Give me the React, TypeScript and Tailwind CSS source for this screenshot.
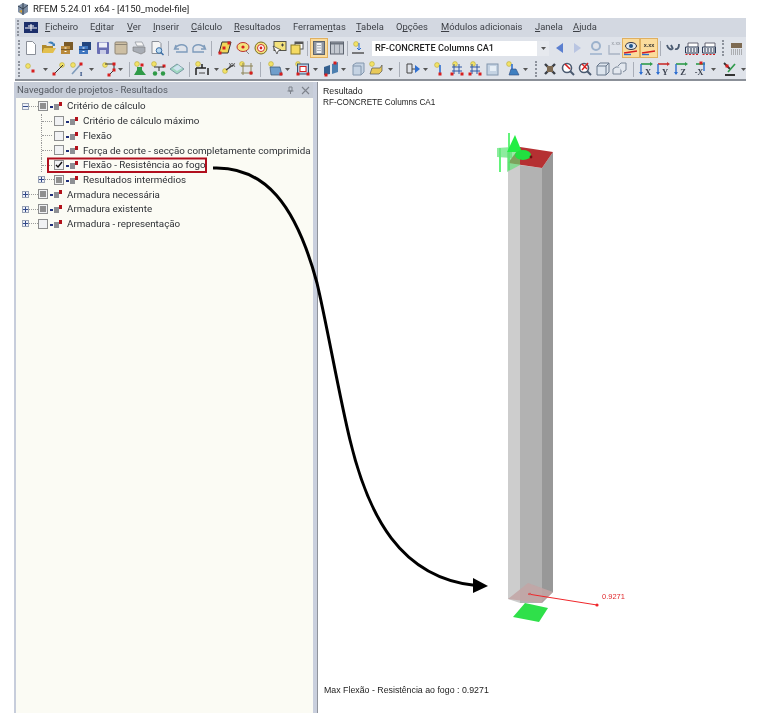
import React from "react";

const uiFont = { fontFamily: 'Roboto, "Noto Sans", sans-serif' };

function I({ c = "", children }: { c?: string; children?: React.ReactNode }) {
  return (
    <svg width="16" height="16" viewBox="0 0 16 16" className={"shrink-0 " + c}>
      {children}
    </svg>
  );
}

function Active({ c = "", children }: { c?: string; children?: React.ReactNode }) {
  return (
    <span className={"w-[18px] h-[20px] shrink-0 flex items-center justify-center border border-[#e0b060] bg-[#fbdc9c] " + c}>
      <svg width="16" height="16" viewBox="0 0 16 16">{children}</svg>
    </span>
  );
}

function Caret({ c = "" }: { c?: string }) {
  return (
    <svg width="7" height="16" viewBox="0 0 7 16" className={"shrink-0 " + c}>
      <path d="M1 7h5l-2.5 3z" fill="#555" />
    </svg>
  );
}

function Sep({ c = "" }: { c?: string }) {
  return <span className={"w-px h-[15px] shrink-0 bg-[#a9aeb8] " + c} />;
}

function Grip({ c = "" }: { c?: string }) {
  return <span className={"w-[2px] h-[16px] shrink-0 border-l-2 border-dotted border-[#8d929c] " + c} />;
}

const Y = ({ x, y }: { x: number; y: number }) => <circle cx={x} cy={y} r="2.4" fill="#f2e268" stroke="#b9a93a" strokeWidth=".6" />;
const R = ({ x, y }: { x: number; y: number }) => <rect x={x - 1.5} y={y - 1.5} width="3" height="3" fill="#d81e1e" />;

const Doc = () => <path d="M3.5 1.5h6l3 3v10h-9z" fill="#fff" stroke="#8a8f98" />;
const Folder = () => (
  <>
    <path d="M1 13V5h4l1 1h6v7z" fill="#b08a2c" />
    <path d="M1 13l2-5h12l-3 5z" fill="#e3c04e" />
    <path d="M7 3c2-2 5-2 6 1l1-1v3h-3l1-1c-1-1-3-2-5-2z" fill="#3d7fb8" />
  </>
);
const Drawers = ({ a, b }: { a: string; b: string }) => (
  <>
    <path d="M5 2h9v8H5z" fill={b} />
    <path d="M2 6h9v8H2z" fill={a} />
    <path d="M2 9.5h9" stroke={b} />
    <rect x="5.5" y="7.5" width="2" height="1" fill="#fff" />
    <rect x="5.5" y="11" width="2" height="1" fill="#fff" />
  </>
);
const Floppy = () => (
  <>
    <rect x="2" y="2" width="12" height="12" rx="1" fill="#6a6fb4" />
    <rect x="4" y="2.5" width="8" height="5" fill="#eef0f8" />
    <rect x="5" y="10" width="6" height="4" fill="#c9cce6" />
  </>
);
const Notes = () => (
  <>
    <rect x="2" y="2" width="12" height="12" rx="1" fill="#cdbfa4" stroke="#8f8676" />
    <path d="M2 4.5h12" stroke="#8f8676" />
  </>
);
const Printer = () => (
  <>
    <path d="M4 2h7l2 4H6z" fill="#f4f4f4" stroke="#8a8f98" strokeWidth=".7" />
    <path d="M2 7h12v5l-4 2-8-3z" fill="#a8adb5" stroke="#777" strokeWidth=".6" />
  </>
);
const Preview = () => (
  <>
    <path d="M3 1.5h7l2 2v10H3z" fill="#f4f4f4" stroke="#8a8f98" />
    <circle cx="10" cy="10.5" r="2.8" fill="#b8d8f0" stroke="#3a6ea5" />
    <path d="M12 12.5l2.5 2.5" stroke="#3a6ea5" strokeWidth="1.5" />
  </>
);
const Undo = ({ flip = false }: { flip?: boolean }) => (
  <g transform={flip ? "translate(16 0) scale(-1 1)" : undefined}>
    <path d="M3 5l-1.5 4h4.5M2 9c2-5 10-6 12-1v4H3" fill="none" stroke="#7f9cbc" strokeWidth="1.4" />
  </g>
);
const Para = () => (
  <>
    <path d="M5 2h9l-3 11H2z" fill="#f0d65a" stroke="#333" />
    <R x={3} y={13} />
    <R x={12} y={3} />
    <R x={7} y={8} />
  </>
);
const Blob = () => (
  <>
    <ellipse cx="8" cy="7" rx="6" ry="4.5" fill="#f3e27c" stroke="#b33" />
    <circle cx="8" cy="7" r="1.6" fill="#d81e1e" />
    <path d="M11 11l3 3" stroke="#888" />
  </>
);
const Target = () => (
  <>
    <circle cx="8" cy="8" r="6" fill="#f3e27c" stroke="#7a6a20" />
    <circle cx="8" cy="8" r="3.5" fill="#fff" stroke="#c33" />
    <circle cx="8" cy="8" r="1.4" fill="#d81e1e" />
  </>
);
const Screen = () => (
  <>
    <rect x="3" y="1.5" width="12" height="9" fill="#f3e27c" stroke="#54544a" />
    <path d="M2 6l4 8 1-3 3-1z" fill="#fff" stroke="#333" strokeWidth=".7" />
    <path d="M10 5h3M11.5 3.5v3" stroke="#444" />
  </>
);
const Win = () => (
  <>
    <rect x="6" y="2" width="8" height="7" fill="#fff" stroke="#555" />
    <rect x="6" y="2" width="8" height="2" fill="#555" />
    <rect x="2" y="5" width="9" height="9" fill="#f4da62" stroke="#8a7a28" />
  </>
);
const ColumnsPanel = () => (
  <>
    <rect x="2.5" y="1.5" width="11" height="13" fill="#8f96a1" stroke="#5c636e" />
    <rect x="5.5" y="3" width="5" height="10" fill="#f1f2f4" />
    <path d="M6 5.5h4M6 8h4M6 10.5h4" stroke="#9aa0aa" strokeWidth=".8" />
  </>
);
const TablePanel = () => (
  <>
    <rect x="1.5" y="2" width="13" height="12" fill="#c4c9d1" stroke="#5c636e" />
    <rect x="2" y="2.5" width="12" height="2" fill="#6d747f" />
    <path d="M5.5 4v10M10.5 4v10" stroke="#7e8590" strokeWidth=".8" />
  </>
);
const Eye = () => (
  <>
    <ellipse cx="8" cy="6" rx="5.5" ry="3.5" fill="#dfe7ef" stroke="#334" />
    <circle cx="8" cy="6" r="2" fill="#20548a" />
    <path d="M1 13l13-2" stroke="#d81e1e" strokeWidth="1.4" />
    <path d="M1 14.5h7" stroke="#2f6fd0" strokeWidth="1.4" />
  </>
);
const XX = () => (
  <>
    <text x="8" y="7" textAnchor="middle" fontSize="5.5" fontWeight="700" fill="#333" fontFamily="Liberation Sans">x.xx</text>
    <path d="M1 13l13-2" stroke="#d81e1e" strokeWidth="1.4" />
    <path d="M1 14.5h7" stroke="#2f6fd0" strokeWidth="1.4" />
  </>
);
const Chart = () => (
  <>
    <path d="M4 3h10v6H4z" fill="#fff" stroke="#445" strokeWidth=".8" />
    <path d="M1.5 7h13v6h-13z" fill="#e6e9ef" stroke="#2b3a55" />
    <path d="M4 8v4M7 8v4M10 8v4M13 8v4" stroke="#2b3a55" />
    <path d="M1.5 14.5h13" stroke="#d81e1e" strokeDasharray="2 1.5" />
  </>
);
const Axis = ({ l, col }: { l: string; col: string }) => (
  <>
    <path d="M3 3h9" stroke={col} strokeWidth="1.6" />
    <path d="M3 3v10" stroke="#2f6fd0" strokeWidth="1.4" />
    <path d="M1 11l2 3 2-3z" fill="#2f6fd0" />
    <path d="M12 1l3 2-3 2z" fill={col} />
    <text x="10" y="13.5" textAnchor="middle" fontSize="8.5" fontWeight="700" fill="#3b4250" fontFamily="Liberation Serif">{l}</text>
  </>
);

function CheckBox({ state }: { state: "none" | "part" | "on" }) {
  return (
    <span className="w-[10px] h-[10px] shrink-0 border border-[#8e8f8f] bg-[#f1f2f4] flex items-center justify-center">
      {state === "part" && <span className="w-[6px] h-[6px] bg-[#8f8f8f]" />}
      {state === "on" && (
        <svg width="8" height="8" viewBox="0 0 8 8">
          <path d="M1 4l2 2 4-5" fill="none" stroke="#111" strokeWidth="1.4" />
        </svg>
      )}
    </span>
  );
}

function TreeIcon() {
  return (
    <svg width="13" height="10" viewBox="0 0 13 10" className="shrink-0 ml-[2px]">
      <rect x="0" y="5" width="3" height="2" fill="#1f2f7a" />
      <rect x="4" y="3" width="5" height="6" fill="#8d8f93" />
      <rect x="9" y="1" width="3" height="4" fill="#b3111b" />
    </svg>
  );
}

function Expander({ open = false }: { open?: boolean }) {
  return (
    <span className="w-[7px] h-[7px] shrink-0 border border-[#9aa3b5] bg-[#eef1f8] flex items-center justify-center relative">
      <span className="w-[5px] h-px bg-[#334a8a]" />
      {!open && <span className="absolute w-px h-[5px] bg-[#334a8a]" />}
    </span>
  );
}

const Dash = ({ c }: { c: string }) => <span className={"h-px shrink-0 border-t border-dotted border-[#9a9a9a] " + c} />;

function Top({ state, label, open }: { state: "none" | "part" | "on"; label: string; open?: boolean }) {
  return (
    <div className="h-[14.7px] flex items-center pl-[6px]">
      <Expander open={open} />
      <Dash c="w-[9px]" />
      <CheckBox state={state} />
      <TreeIcon />
      <span className="ml-[4px]">{label}</span>
    </div>
  );
}

function Sub({ state, label, exp }: { state: "none" | "part" | "on"; label: string; exp?: boolean }) {
  return (
    <div className="h-[14.7px] flex items-center pl-[22px]">
      {exp ? (
        <>
          <Expander />
          <Dash c="w-[9px]" />
        </>
      ) : (
        <span className="w-[13px] h-full ml-[3px] flex items-center border-l border-dotted border-[#9a9a9a]">
          <Dash c="w-[10px]" />
        </span>
      )}
      <CheckBox state={state} />
      <TreeIcon />
      <span className="ml-[4px] whitespace-nowrap">{label}</span>
    </div>
  );
}

function Menu({ children, c }: { children: React.ReactNode; c: string }) {
  return <span className={"shrink-0 whitespace-nowrap " + c}>{children}</span>;
}

export default function App() {
  return (
    <div className="relative w-[760px] h-[713px] bg-white overflow-hidden flex flex-col blur-[0.4px] text-[#3c3f45]" style={uiFont}>
      <div className="h-[18px] flex items-center pl-[16px] text-[9.5px] text-[#222]">
        <svg width="14" height="14" viewBox="0 0 14 14" className="shrink-0">
          <path d="M2 4l5-3 5 2v7l-5 3-5-3z" fill="#7e8fa6" />
          <path d="M7 1v12M2 4l5 3 5-4" stroke="#33404f" fill="none" />
          <path d="M3 9l3-1 0 3z" fill="#d8a12c" />
        </svg>
        <span className="ml-[3px]">RFEM 5.24.01 x64 - [4150_model-file]</span>
      </div>

      <div className="ml-[15px] w-[731px] overflow-hidden">
        <div className="h-[19px] bg-[#d3d8e1] flex items-center text-[9.4px]">
          <Grip c="ml-[2px]" />
          <svg width="14" height="11" viewBox="0 0 14 11" className="shrink-0 ml-[5px]">
            <rect width="14" height="11" fill="#1c2f6b" />
            <path d="M1 6h12M7 2v7M4 4h6" stroke="#fff" />
          </svg>
          <Menu c="ml-[7px] w-[45px]"><u>F</u>icheiro</Menu>
          <Menu c="w-[37px]">E<u>d</u>itar</Menu>
          <Menu c="w-[26px]"><u>V</u>er</Menu>
          <Menu c="w-[38px]"><u>I</u>nserir</Menu>
          <Menu c="w-[43px]"><u>C</u>álculo</Menu>
          <Menu c="w-[59px]"><u>R</u>esultados</Menu>
          <Menu c="w-[63px]">Ferrame<u>n</u>tas</Menu>
          <Menu c="w-[40px]"><u>T</u>abela</Menu>
          <Menu c="w-[45px]">O<u>p</u>ções</Menu>
          <Menu c="w-[94px]"><u>M</u>ódulos adicionais</Menu>
          <Menu c="w-[38px]"><u>J</u>anela</Menu>
          <Menu c="w-[40px]"><u>A</u>juda</Menu>
        </div>

        <div className="h-[22px] bg-[#dfe3ea] flex items-center">
          <Grip c="ml-[3px]" />
          <I c="ml-[3px]"><Doc /></I>
          <I c="ml-0.5"><Folder /></I>
          <I c="ml-0.5"><Drawers a="#b98a3c" b="#7a5a28" /></I>
          <I c="ml-0.5"><Drawers a="#3f76bf" b="#23467f" /></I>
          <I c="ml-0.5"><Floppy /></I>
          <I c="ml-0.5"><Notes /></I>
          <I c="ml-0.5"><Printer /></I>
          <I c="ml-0.5"><Preview /></I>
          <Sep c="ml-[3px]" />
          <I c="ml-1"><Undo /></I>
          <I c="ml-0.5"><Undo flip /></I>
          <Sep c="ml-1" />
          <I c="ml-[5px]"><Para /></I>
          <I c="ml-0.5"><Blob /></I>
          <I c="ml-0.5"><Target /></I>
          <I c="ml-0.5"><Screen /></I>
          <I c="ml-0.5"><Win /></I>
          <Sep c="ml-0.5" />
          <Active c="ml-0.5"><ColumnsPanel /></Active>
          <I c="ml-px"><TablePanel /></I>
          <Sep c="ml-0.5" />
          <I c="ml-0.5"><Y x={6} y={4} /><path d="M9 3v7l-2-2m2 2l2-2" stroke="#2f6fd0" fill="none" /><path d="M2 13h12" stroke="#555" strokeWidth="1.5" /></I>
          <div className="ml-1.5 w-[165px] h-[15px] bg-white flex items-center pl-[3px] text-[9.2px] font-medium text-[#222] whitespace-nowrap">RF-CONCRETE Columns CA1</div>
          <div className="w-[12px] h-[15px] bg-[#e6e9ee] flex items-center justify-center">
            <Caret />
          </div>
          <I c="ml-[3px]"><path d="M11 3L4 8l7 5z" fill="#5b7fd0" /></I>
          <I c="ml-px"><path d="M5 3l7 5-7 5z" fill="#b9c5e2" /></I>
          <I c="ml-[3px]"><circle cx="8" cy="6" r="4" fill="none" stroke="#9cb2cc" strokeWidth="2" /><path d="M2 14h12" stroke="#9cb2cc" strokeWidth="1.5" /></I>
          <I c="ml-0.5"><text x="10" y="5" textAnchor="middle" fontSize="5" fill="#8a8f98" fontFamily="Liberation Sans">x.xx</text><path d="M3 5v9h11" stroke="#a9b4c4" fill="none" strokeWidth="1.3" /></I>
          <Active><Eye /></Active>
          <Active><XX /></Active>
          <Sep c="ml-0.5" />
          <I c="ml-1"><path d="M2 5c1 4 4 5 6 4M6 5l2 4M10 9c3 1 4-2 4-5" stroke="#4a5a70" fill="none" strokeWidth="1.8" /></I>
          <I c="ml-[3px]"><Chart /></I>
          <I c="ml-px"><Chart /></I>
          <Grip c="ml-[5px]" />
          <I c="ml-[5px]"><path d="M2 3h11v5H2z" fill="#7d6a52" /><path d="M2 10h12M2 12h12M2 14h12" stroke="#777" strokeDasharray="1 1" /></I>
        </div>

        <div className="h-[22px] bg-[#dfe3ea] flex items-center border-b-2 border-[#8b9098]">
          <Grip c="ml-[3px]" />
          <I c="ml-[3px]"><Y x={5} y={5} /><R x={10} y={10} /></I>
          <Caret c="ml-[3px]" />
          <I c="ml-0.5"><Y x={11} y={4} /><path d="M3 13L12 4" stroke="#333" /><R x={3} y={13} /></I>
          <I c="ml-0.5"><Y x={4} y={4} /><path d="M3 13L12 3" stroke="#7f9cbc" strokeWidth="1.6" /><R x={12} y={3} /><text x="12" y="15" textAnchor="middle" fontSize="7" fontWeight="700" fill="#2b4a80" fontFamily="Liberation Serif">I</text></I>
          <Caret c="ml-[3px]" />
          <I c="ml-1.5"><Y x={4} y={4} /><path d="M4 3h9v6l-5 5" fill="none" stroke="#333" /><R x={13} y={3} /><R x={13} y={9} /><R x={8} y={14} /></I>
          <Caret />
          <Sep c="ml-[5px]" />
          <I c="ml-0.5"><Y x={5} y={3} /><path d="M5 6h5v3l4 5H2l3-5z" fill="#2f9a48" /><R x={10} y={4} /></I>
          <I c="ml-[3px]"><Y x={3} y={3} /><R x={13} y={5} /><path d="M3 6h10M8 6v4" stroke="#333" /><circle cx="4" cy="12.5" r="2.2" fill="#2f9a48" /><circle cx="12" cy="12.5" r="2.2" fill="#2f9a48" /></I>
          <I c="ml-0.5"><path d="M1 8l7-5 7 5-7 5z" fill="#9fd8c0" stroke="#7a9aa5" /><path d="M4 7l5-3 4 3-5 3z" fill="#cfe3ef" /></I>
          <Sep c="ml-1" />
          <I c="ml-1"><Y x={4} y={3} /><path d="M2 7h10M8 3v4M2 7v7M14 7v7" stroke="#222" strokeWidth="1.5" /><path d="M5 12h6" stroke="#444" /></I>
          <Caret c="ml-[3px]" />
          <I c="ml-px"><Y x={4} y={10} /><path d="M5 9l7-5" stroke="#333" strokeWidth="1.2" /><text x="11" y="6" textAnchor="middle" fontSize="5" fontWeight="700" fill="#555" fontFamily="Liberation Sans">XX</text></I>
          <I c="ml-0.5"><Y x={3} y={3} /><path d="M4 2v12M12 2v12M2 5h12M2 12h12" stroke="#8d8456" /><R x={12} y={12} /></I>
          <Sep c="ml-[5px]" />
          <I c="ml-1.5"><Y x={4} y={3} /><path d="M3 6h10l2 8H4z" fill="#6f9ecb" stroke="#33506f" strokeWidth=".7" /><R x={14} y={13} /></I>
          <Caret c="ml-px" />
          <I c="ml-1"><Y x={3} y={3} /><rect x="2.5" y="3" width="11" height="10" fill="#b9cbe0" stroke="#35506f" /><rect x="5" y="5.5" width="6" height="5" fill="#fff" stroke="#d81e1e" /><R x={3} y={13} /><R x={13} y={13} /></I>
          <Caret c="ml-px" />
          <I c="ml-1"><path d="M1 6l6-2v9l-6 1z" fill="#35608f" /><path d="M9 3l6-2v10l-6 2z" fill="#4c7fb0" /><R x={3} y={14} /><R x={12} y={2} /></I>
          <Caret c="ml-px" />
          <I c="ml-[3px]"><path d="M3 4l3-2h8v9l-3 3H3z" fill="#c5d3e3" stroke="#8296ad" /><path d="M3 5h8v9" fill="none" stroke="#8296ad" /></I>
          <I c="ml-px"><Y x={5} y={3} /><path d="M5 7h8l2-3v6l-3 3H3z" fill="#e8c95a" stroke="#555" strokeWidth=".7" /></I>
          <Caret c="ml-1" />
          <Sep c="ml-[5px]" />
          <I c="ml-[5px]"><path d="M2 3h5v9H2z" fill="none" stroke="#444" /><path d="M7 8h4" stroke="#444" /><path d="M10 4l5 4-5 4z" fill="#2f6fd0" /></I>
          <Caret c="ml-px" />
          <I c="ml-px"><Y x={7} y={4} /><path d="M10 4v8" stroke="#2f6fd0" strokeWidth="1.6" /><R x={10} y={13} /></I>
          <I c="ml-[3px]"><Y x={6} y={3} /><path d="M3 6h10M3 10h10M5 3v10M10 3v10" stroke="#3158a5" /><R x={3} y={13} /><R x={13} y={13} /></I>
          <I c="ml-0.5"><Y x={6} y={3} /><path d="M3 6h10M3 10h10M5 3v10M10 3v10" stroke="#3158a5" /><R x={3} y={13} /><R x={13} y={13} /></I>
          <I c="ml-0.5"><rect x="2" y="3" width="11" height="11" fill="#c5d3e3" stroke="#8296ad" /><rect x="5" y="5" width="6" height="5" fill="#e6eef6" /></I>
          <I c="ml-1"><Y x={4} y={3} /><path d="M7 3v5" stroke="#2f6fd0" strokeWidth="1.6" /><path d="M4 14l2-6h5l3 6z" fill="#3f7fc0" stroke="#2b4a80" strokeWidth=".6" /></I>
          <Caret c="ml-px" />
          <Grip c="ml-1.5" />
          <I c="ml-[5px]"><path d="M3 3l10 10M13 3L3 13" stroke="#3a3f47" strokeWidth="2.4" /><rect x="5" y="5" width="6" height="6" fill="#7d6a52" /></I>
          <I c="ml-0.5"><circle cx="7" cy="7" r="4.5" fill="#fff" stroke="#4a5a70" strokeWidth="1.6" /><path d="M10 10l4 4" stroke="#4a5a70" strokeWidth="2" /><path d="M5 3l5 5" stroke="#d81e1e" strokeWidth="1.6" /></I>
          <I c="ml-px"><circle cx="7" cy="7" r="4.5" fill="#fff" stroke="#4a5a70" strokeWidth="1.6" /><path d="M10 10l4 4" stroke="#4a5a70" strokeWidth="2" /><path d="M5 9l6-7M5 3l5 5" stroke="#d81e1e" strokeWidth="1.4" /></I>
          <I c="ml-0.5"><path d="M2 5l3-3h9v9l-3 3H2z" fill="#dde5ee" stroke="#68788c" /><path d="M2 5h9v9M11 5l3-3" fill="none" stroke="#68788c" /></I>
          <I c="ml-px"><path d="M1 8l3-2h5v7H1z" fill="#e3e8ef" stroke="#7b8798" /><path d="M6 5l3-3h5v7l-3 2" fill="#e3e8ef" stroke="#7b8798" /></I>
          <Sep c="ml-[5px]" />
          <I c="ml-1"><Axis l="X" col="#2e9a4a" /></I>
          <I c="ml-px"><Axis l="Y" col="#c8302f" /></I>
          <I c="ml-0.5"><Axis l="Z" col="#2e9a4a" /></I>
          <I c="ml-[3px]"><path d="M4 3h9" stroke="#2e9a4a" strokeWidth="1.6" /><path d="M12 1v9" stroke="#2f6fd0" strokeWidth="1.4" /><R x={9} y={2} /><text x="7" y="14" textAnchor="middle" fontSize="8" fontWeight="700" fill="#3b4250" fontFamily="Liberation Serif">-X</text></I>
          <Caret c="ml-0.5" />
          <I c="ml-[5px]"><path d="M2 2l6 6M3 14h10" stroke="#333" strokeWidth="1.8" /><path d="M13 3L6 11" stroke="#2e9a4a" strokeWidth="1.6" /><R x={5} y={5} /></I>
          <Caret c="ml-0.5" />
        </div>
      </div>

      <div className="flex-1 min-h-0 flex ml-[14px] mt-px">
        <div className="w-[299px] flex flex-col border-l-2 border-[#c7cddb]">
          <div className="h-[16px] bg-[#c6ccd7] flex items-center pl-px text-[9.55px] text-[#555a62]">
            <span className="flex-1">Navegador de projetos - Resultados</span>
            <svg width="9" height="9" viewBox="0 0 9 9" className="mr-[6px]">
              <path d="M3 1h3v4H3zM1.5 5h6M4.5 5v3" fill="none" stroke="#7d828b" />
            </svg>
            <svg width="9" height="9" viewBox="0 0 9 9" className="mr-[3px]">
              <path d="M1 1l7 7M8 1L1 8" stroke="#7d828b" strokeWidth="1.1" />
            </svg>
          </div>
          <div className="flex-1 bg-[#fbfbf4] pt-px text-[9.8px] text-[#2e3136] leading-none">
            <Top state="part" label="Critério de cálculo" open />
            <Sub state="none" label="Critério de cálculo máximo" />
            <Sub state="none" label="Flexão" />
            <Sub state="none" label="Força de corte - secção completamente comprimida" />
            <Sub state="on" label="Flexão - Resistência ao fogo" />
            <Sub state="part" label="Resultados intermédios" exp />
            <Top state="part" label="Armadura necessária" />
            <Top state="part" label="Armadura existente" />
            <Top state="none" label="Armadura - representação" />
          </div>
        </div>

        <div className="w-[5px] bg-[#c9cfdd] border-r border-[#8f939b]" />

        <div className="relative flex-1 pl-[5px] pt-[4px] text-[8.8px] leading-[11px] text-[#222]" style={{ fontFamily: '"Liberation Sans", Arial, sans-serif' }}>
          <div>Resultado</div>
          <div className="text-[8.2px]">RF-CONCRETE Columns CA1</div>
          <div className="absolute left-[6px] top-[603px]">Max Flexão - Resistência ao fogo : 0.9271</div>
        </div>
      </div>

      {/* column model + callout arrow, page coordinates */}
      <svg width="760" height="713" viewBox="0 0 760 713" className="absolute left-0 top-0 pointer-events-none">
        <path d="M508 163L520 165V603L508 599z" fill="#cdcdcd" />
        <path d="M520 165L542 168V603L520 603z" fill="#b2b2b2" />
        <path d="M542 168L553 152V592L542 603z" fill="#989898" />
        <path d="M520 147L553 152L542 168L508 163z" fill="#b53032" />
        <path d="M508 599L528 583L553 592L541 603z" fill="#c2a5a5" fillOpacity=".85" />
        <path d="M525 603L548 608L539 622L513 617z" fill="#2fe04a" />
        <path d="M528 594L597 605" stroke="#f0262a" strokeWidth="1" />
        <circle cx="597" cy="605" r="1.6" fill="#f0262a" />
        <circle cx="530" cy="594" r="1.2" fill="#d06060" />
        <text x="602" y="599" fontSize="7.5" fill="#e0282c" fontFamily="Liberation Sans">0.9271</text>

        <path d="M509 133V170M500 148V172" stroke="#3df05a" strokeWidth="1.6" />
        <path d="M497 148L512 147V158L497 157z" fill="#66e57e" fillOpacity=".75" />
        <path d="M515 135L507 152H522z" fill="#22ee44" />
        <path d="M507 152H520V165L507 172z" fill="#5fe074" fillOpacity=".65" />
        <ellipse cx="523" cy="155" rx="8" ry="5" fill="#22e040" />
        <circle cx="531" cy="157" r="1.4" fill="#6b1010" />

        <rect x="48" y="158.5" width="158" height="13.5" fill="none" stroke="#b10f1e" strokeWidth="2" />
        <path d="M213 168C265 166 296 205 317 283C327 325 339 395 350 440C368 515 400 578 476 585.5" fill="none" stroke="#000" strokeWidth="3" />
        <path d="M488 586L473 578L473 593z" fill="#000" />
      </svg>
    </div>
  );
}
